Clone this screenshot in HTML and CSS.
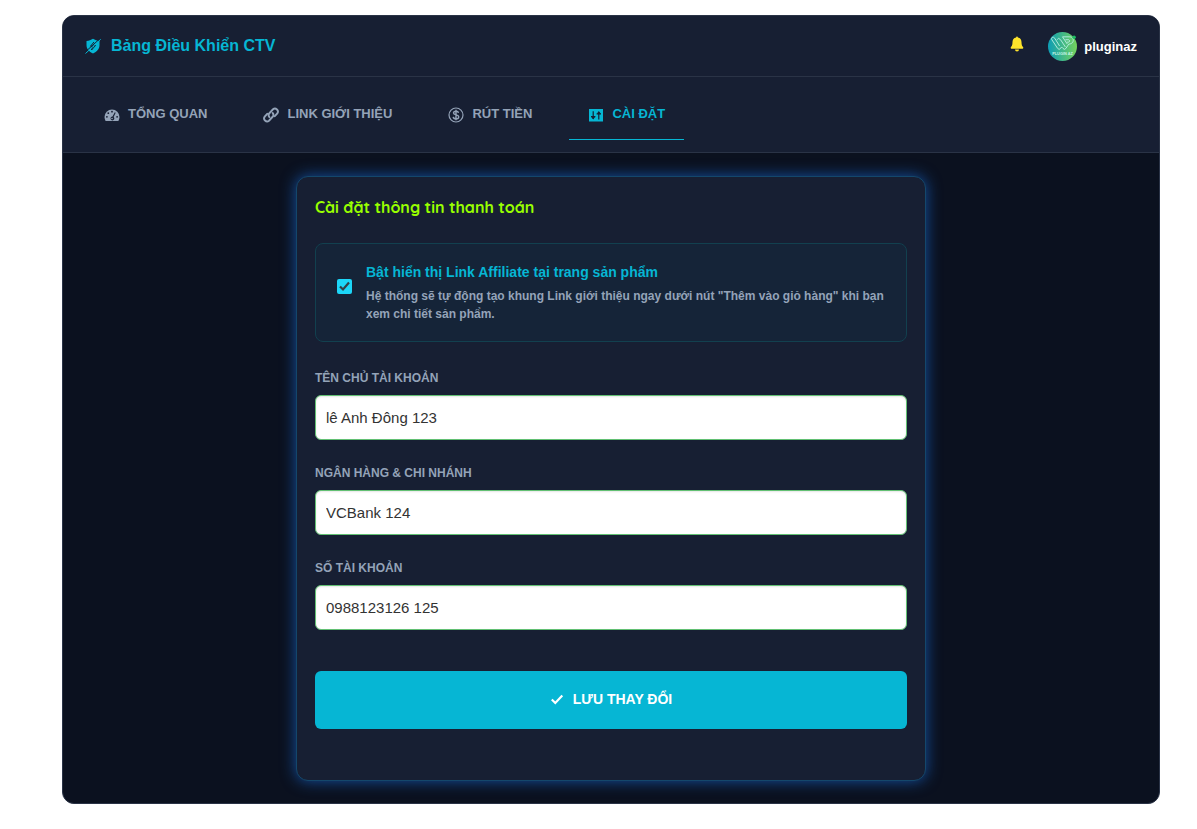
FILE: index.html
```
<!DOCTYPE html>
<html lang="vi">
<head>
  <meta charset="UTF-8" />
  <meta name="viewport" content="width=device-width, initial-scale=1.0">
  <title>Bảng Điều Khiển CTV</title>
  <link rel="stylesheet" href="styles.css">
</head>
<body>
  <div class="dashboard">
    <header class="topbar">
      <div class="brand">
        <svg class="icon" viewBox="0 0 16 16" aria-hidden="true">
          <path fill="currentColor" d="M1.500 3C4 3 6 2 8 .8 10 2 12 3 14.500 3V7c0 4-2.500 6.800-6.500 8.500C4 13.800 1.500 11 1.500 7z"/>
          <path stroke="#171f33" stroke-width="1" fill="none" d="M0 14.200 15 .6M9 4 5.500 8.200h2.200L6.500 12l4-4.500H8.500"/>
          <path stroke="currentColor" stroke-width="1" d="M.5 15.500 15.700 1.300"/>
        </svg>
        <span>Bảng Điều Khiển CTV</span>
      </div>
      <div class="account">
        <button type="button" class="bell" aria-label="Thông báo">
          <svg viewBox="0 0 14 16" aria-hidden="true">
            <path fill="currentColor" d="M6.100 1.500a.9.9 0 0 1 1.800 0C10.300 2 11.500 3.800 11.500 6c0 3.200.8 4.300 1.500 5 .6.700.2 1.800-.8 1.800H1.800C.8 12.800.4 11.700 1 11c.7-.7 1.500-1.800 1.500-5 0-2.200 1.200-4 3.600-4.500zM5 13.600h4a2 2 0 0 1-4 0z"/>
          </svg>
        </button>
        <a href="#" class="user">
          <svg class="avatar" viewBox="0 0 30 30" aria-hidden="true">
            <defs>
              <linearGradient id="avatarFill" x1="0" x2="1" y1="0" y2="0">
                <stop offset="0" stop-color="#0d9cb5"/>
                <stop offset="1" stop-color="#75d35c"/>
              </linearGradient>
            </defs>
            <circle cx="15" cy="15" r="15" fill="url(#avatarFill)"/>
            <path fill="none" stroke="#b4ece0" stroke-width="1" stroke-linejoin="round" d="M4.500 5.500q-1.500 1-.5 2.500L10 17q1.500 2 3 0l1-1.500 1.500 1.500q1.500 2 3 0l3-4.500c6 0 6-7.500 1-7.500h-7.500M4.500 5.500q1.500-.5 2.500 1l5 8M9.500 8q1-3 3.500 0l5 7.500M15 5l5 7.500M18 8h3.500q2 1.200 0 2.500h-2"/>
            <circle cx="27" cy="5.500" r="1.800" fill="#1fbd63"/>
            <text x="15" y="23.500" class="avatar-text">PLUGIN AZ</text>
          </svg>
          <span>pluginaz</span>
        </a>
      </div>
    </header>

    <nav class="tabs">
      <a href="#" class="tab">
        <svg class="icon" viewBox="0 0 16 16" aria-hidden="true">
          <path fill="currentColor" d="M.5 10a7.500 7.500 0 0 1 15 0c0 1.500-.4 2.800-1.100 4H1.600C.9 12.800.5 11.500.5 10z"/>
          <g fill="#171f33">
            <circle cx="8" cy="4.700" r=".9"/><circle cx="4.300" cy="6.200" r=".9"/><circle cx="2.900" cy="9.800" r=".9"/><circle cx="13.100" cy="9.800" r=".9"/>
            <path d="M10.800 5.200l.9.500-2.100 4.300a1.900 1.900 0 1 1-1.100-.4z"/>
          </g>
          <circle cx="8" cy="11.500" r=".8" fill="currentColor"/>
        </svg>
        <span>TỔNG QUAN</span>
      </a>
      <a href="#" class="tab">
        <svg class="icon" viewBox="0 0 16 16" aria-hidden="true">
          <g fill="none" stroke="currentColor" stroke-width="1.900" stroke-linecap="round">
            <path d="M6.400 10.100A3 3 0 0 1 6.600 6L10 2.300a3 3 0 0 1 4.300 4.100l-2.500 2.800"/>
            <path d="M9.600 5.900a3 3 0 0 1-.2 4.100L6 13.700a3 3 0 0 1-4.300-4.100l2.500-2.800"/>
          </g>
        </svg>
        <span>LINK GIỚI THIỆU</span>
      </a>
      <a href="#" class="tab">
        <svg class="icon" viewBox="0 0 16 16" aria-hidden="true">
          <g fill="none" stroke="currentColor">
            <circle cx="8" cy="8" r="7" stroke-width="1.200"/>
            <path stroke-width="1.400" d="M10.500 5.900C10.300 4.700 9.300 4.300 8 4.300c-1.500 0-2.500.7-2.500 1.800C5.500 8.600 10.700 7.200 10.700 9.900c0 1.200-1.200 1.900-2.700 1.900s-2.600-.6-2.800-2M8 2.800v10.500"/>
          </g>
        </svg>
        <span>RÚT TIỀN</span>
      </a>
      <a href="#" class="tab active" aria-current="page">
        <svg class="icon" viewBox="0 0 16 16" aria-hidden="true">
          <path fill="currentColor" d="M1 2h14v12.500H1z"/>
          <path fill="none" stroke="#171f33" stroke-width="1.200" d="M5.200 4.300V12M3 9.700h4.400M10.800 12.500V5M8.600 6.800H13"/>
          <path fill="#171f33" d="M3.200 9.700h4L5.200 12.500zM8.800 6.800h4L10.800 4z"/>
        </svg>
        <span>CÀI ĐẶT</span>
      </a>
    </nav>

    <main class="content">
      <form class="card">
        <h1>Cài đặt thông tin thanh toán</h1>

        <div class="option">
          <input type="checkbox" id="showLink" checked>
          <label for="showLink">
            <strong>Bật hiển thị Link Affiliate tại trang sản phẩm</strong>
            <span>Hệ thống sẽ tự động tạo khung Link giới thiệu ngay dưới nút "Thêm vào giỏ hàng" khi bạn xem chi tiết sản phẩm.</span>
          </label>
        </div>

        <div class="field">
          <label for="owner">TÊN CHỦ TÀI KHOẢN</label>
          <input type="text" id="owner" value="lê Anh Đông 123">
        </div>
        <div class="field">
          <label for="bank">NGÂN HÀNG &amp; CHI NHÁNH</label>
          <input type="text" id="bank" value="VCBank 124">
        </div>
        <div class="field">
          <label for="number">SỐ TÀI KHOẢN</label>
          <input type="text" id="number" value="0988123126 125">
        </div>

        <button type="submit" class="save">
          <svg viewBox="0 0 14 14" aria-hidden="true">
            <path fill="none" stroke="currentColor" stroke-width="2.200" d="M1.800 7.500 5.300 11 12.300 3.500"/>
          </svg>
          <span>LƯU THAY ĐỔI</span>
        </button>
      </form>
    </main>
  </div>
</body>
</html>
```
FILE: styles.css
```
* {
  box-sizing: border-box;
}

body {
  margin: 0;
  padding: 15px 37px 25px 62px;
  font-family: "Liberation Sans", Arial, sans-serif;
  background: #fff;
  color: #94a3b8;
}

a {
  color: inherit;
  text-decoration: none;
}

.dashboard {
  background: #0b111f;
  border: 1px solid #2a3346;
  border-radius: 12px;
  overflow: hidden;
}

.icon {
  width: 16px;
  height: 16px;
  flex: none;
}

/* Header */
.topbar {
  display: flex;
  justify-content: space-between;
  align-items: center;
  height: 61px;
  padding: 0 22px;
  background: #171f33;
  border-bottom: 1px solid #2a3346;
}

.brand {
  display: flex;
  align-items: center;
  gap: 10px;
  color: #06b6d4;
  font-size: 16px;
  font-weight: bold;
}

.account,
.user {
  display: flex;
  align-items: center;
}

.account {
  gap: 24px;
}

.user {
  gap: 7px;
  color: #fff;
  font-size: 13px;
  font-weight: bold;
}

.bell {
  display: flex;
  padding: 0 0 5px;
  border: none;
  background: none;
  color: #ffe42b;
  cursor: pointer;
}

.bell svg {
  width: 14px;
  height: 16px;
}

.avatar {
  width: 29px;
  height: 29px;
}

.avatar-text {
  fill: #c8f4e8;
  font-size: 4px;
  font-weight: bold;
  text-anchor: middle;
}

/* Tabs */
.tabs {
  display: flex;
  gap: 18px;
  padding: 12px 22px;
  background: #171f33;
  border-bottom: 1px solid #2a3346;
}

.tab {
  display: flex;
  align-items: center;
  gap: 8px;
  height: 51px;
  padding: 0 19px 2px;
  border-bottom: 1px solid transparent;
  font-size: 13px;
  font-weight: bold;
}

.tab .icon {
  margin-top: 4px;
}

.tab.active {
  color: #06b6d4;
  border-color: #06b6d4;
}

/* Settings card */
.content {
  padding: 23px 20px 22px;
}

.card {
  max-width: 630px;
  margin: 0 auto;
  padding: 18px 18px 51px;
  background: #171f33;
  border: 1px solid #14476b;
  border-radius: 12px;
  box-shadow: 0 0 15px #1450a0;
}

.card h1 {
  margin: 0 0 24px;
  color: #99ff00;
  font-family: Quicksand, Lato, sans-serif;
  font-size: 16px;
  line-height: 24px;
}

.option {
  display: flex;
  align-items: flex-start;
  gap: 14px;
  margin-bottom: 27px;
  padding: 18px 21px;
  background: #152438;
  border: 1px solid #12404f;
  border-radius: 8px;
}

.option input {
  appearance: none;
  flex: none;
  width: 15px;
  height: 15px;
  margin: 17px 0 0;
  border-radius: 2px;
  background: #1cd6f8;
}

.option input:checked {
  background: #1cd6f8 url("data:image/svg+xml,%3Csvg xmlns='http://www.w3.org/2000/svg' viewBox='0 0 15 15'%3E%3Cpath d='M3 7.500 6 10.500 12 3.500' fill='none' stroke='%23334048' stroke-width='2.200'/%3E%3C/svg%3E");
}

.option strong,
.option span {
  display: block;
}

.option strong {
  margin-bottom: 5px;
  color: #06b6d4;
  font-size: 14px;
  line-height: 20px;
}

.option span {
  font-size: 12px;
  font-weight: bold;
  line-height: 18px;
}

.field {
  margin-bottom: 24px;
}

.field label {
  display: block;
  margin-bottom: 8px;
  font-size: 12px;
  font-weight: bold;
  line-height: 18px;
}

.field input {
  display: block;
  width: 100%;
  height: 45px;
  padding: 0 10px;
  border: 1px solid #62c073;
  border-radius: 6px;
  background: #fff;
  box-shadow: inset 0 1px 2px rgba(0, 0, 0, 0.1);
  color: #333;
  font-family: inherit;
  font-size: 15px;
}

.save {
  display: flex;
  justify-content: center;
  align-items: center;
  gap: 9px;
  width: 100%;
  height: 58px;
  margin-top: 41px;
  padding: 0 0 2px;
  border: none;
  border-radius: 6px;
  background: #06b6d4;
  color: #fff;
  font-family: inherit;
  font-size: 14px;
  font-weight: bold;
  cursor: pointer;
}

.save svg {
  width: 14px;
  height: 14px;
}
```
